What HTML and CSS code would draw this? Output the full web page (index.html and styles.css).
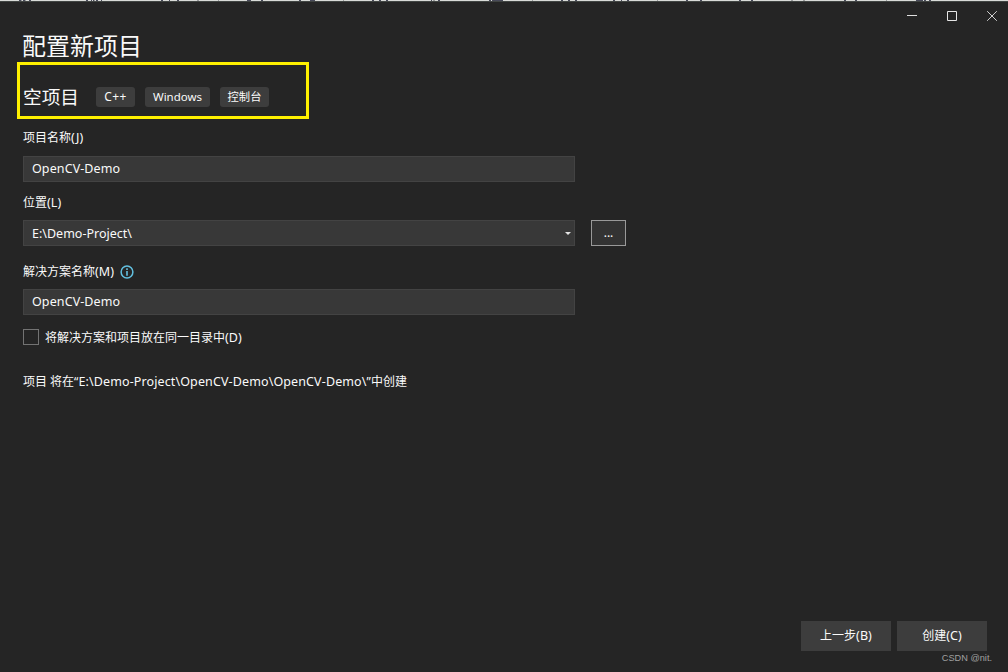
FILE: index.html
```html
<!DOCTYPE html>
<html lang="zh-CN">
<head>
<meta charset="utf-8">
<title>配置新项目</title>
<link rel="stylesheet" href="styles.css">
</head>
<body>
<div class="window">
  <svg class="top-edge" width="1008" height="2" viewBox="0 0 1008 2" shape-rendering="crispEdges">
    <path fill="#d9dbd8" d="M0 0h1008v1H0z"/>
    <path fill="#414543" d="M0 1h1008v1H0z"/>
    <path stroke="#484a59" d="M19 .5h2M23 .5h2M29 .5h2M86 .5h2M91 .5h1M93 .5h1M96 .5h2M101 .5h1M161 .5h2M169 .5h1M177 .5h2M247 .5h4M261 .5h2M299 .5h2M310 .5h5M372 .5h2M379 .5h2M386 .5h2M431 .5h1M438 .5h2M489 .5h2M492 .5h11M561 .5h2M568 .5h2M575 .5h2M613 .5h2M621 .5h1M627 .5h2M686 .5h2M700 .5h2M739 .5h2M751 .5h2M844 .5h2M855 .5h2M916 .5h7M924 .5h2M929 .5h2"/>
    <path stroke="#9a9c9d" d="M21 .5h1M25 .5h1M94 .5h1M197 .5h2M218 .5h1M343 .5h1M433 .5h2M532 .5h1M657 .5h1M791 .5h2M803 .5h2M886 .5h1"/>
  </svg>

  <div class="window-controls">
    <svg width="10" height="10" viewBox="0 0 10 10"><path stroke="#e0e0e0" d="M0 4.5h10"/></svg>
    <svg width="10" height="10" viewBox="0 0 10 10"><path fill="none" stroke="#e6e6e6" d="M.5.5h9v9h-9z"/></svg>
    <svg width="10" height="10" viewBox="0 0 10 10"><path stroke="#d0d0d0" d="M.2.2l9.6 9.6M9.8.2L.2 9.8"/></svg>
  </div>

  <main class="content">
    <h1 class="title">配置新项目</h1>
    <section class="template">
      <h2 class="template-name">空项目</h2>
      <span class="tag tag-lang">C++</span>
      <span class="tag tag-platform">Windows</span>
      <span class="tag tag-type">控制台</span>
    </section>

    <div class="label">项目名称<span class="key">(J)</span></div>
    <div class="field">OpenCV-Demo</div>

    <div class="label label-location">位置<span class="key">(L)</span></div>
    <div class="location-row">
      <div class="field combo"><span>E:\Demo-Project\</span>
        <svg width="6" height="3" viewBox="0 0 6 3"><path fill="#e4e4e4" d="M0 0h6L3 3z"/></svg>
      </div>
      <div class="browse">...</div>
    </div>

    <div class="label label-solution">解决方案名称<span class="key">(M)</span>
      <svg class="info" width="14" height="14" viewBox="0 0 14 14"><circle cx="7" cy="7" r="5.9" fill="none" stroke="#62c0e0" stroke-width="1.5"/><path fill="#62c0e0" d="M6.2 3.3h1.6v1.6H6.2zM6.2 5.9h1.6v4.8H6.2z"/></svg>
    </div>
    <div class="field">OpenCV-Demo</div>

    <div class="check-row"><span class="checkbox"></span><span class="check-text">将解决方案和项目放在同一目录中<span class="key">(D)</span></span></div>
    <p class="summary">项目 将在“<span class="path">E:\Demo-Project\OpenCV-Demo\OpenCV-Demo\</span>”中创建</p>
  </main>

  <footer class="actions">
    <div class="button">上一步<span class="key">(B)</span></div>
    <div class="button">创建<span class="key">(C)</span></div>
  </footer>
  <div class="watermark">CSDN @nit.</div>
</div>
</body>
</html>
```
FILE: styles.css
```css
* { box-sizing: border-box; }

body {
  margin: 0;
  background: #252525;
  color: #fafafa;
  font: 12px/16px "Noto Sans", "Noto Sans CJK SC", sans-serif;
}

.window {
  position: relative;
  display: flex;
  flex-direction: column;
  width: 1008px;
  height: 672px;
  overflow: hidden;
  white-space: nowrap;
}

.top-edge { display: block; flex: none; }

.window-controls {
  display: flex;
  justify-content: flex-end;
  gap: 30px;
  height: 28px;
  padding: 9px 11px 0 0;
}

.content { flex: 1; padding-left: 23px; }

.title {
  height: 32px;
  margin: 0 0 0 -1px;
  font-size: 24px;
  font-weight: 400;
  line-height: 32px;
}

.template {
  display: flex;
  align-items: center;
  width: 292px;
  height: 57px;
  margin-left: -6px;
  padding: 12px 0 0 3px;
  border: 3px solid #fff000;
}

.template-name {
  width: 73px;
  margin: 0;
  font-size: 18.67px;
  font-weight: 400;
  line-height: 24px;
}

.tag {
  height: 20px;
  margin-right: 10px;
  border-radius: 3px;
  background: #3d3d3d;
  font-size: 11.5px;
  line-height: 20px;
  text-align: center;
}

.tag-lang { width: 39px; font-size: 12px; letter-spacing: 0.4px; }
.tag-platform { width: 65px; }
.tag-type { width: 49px; font-size: 11.3px; }

.label {
  display: flex;
  align-items: center;
  height: 16px;
  margin: 11px 0 10px;
}

.key { font-size: 12.5px; letter-spacing: 0.1px; }

.field {
  width: 552px;
  height: 26px;
  padding-left: 8px;
  border: 1px solid #434343;
  background: #383838;
  font-size: 12.5px;
  line-height: 24px;
  letter-spacing: 0.1px;
}

.label-location { margin: 13px 0 9px; }
.location-row { display: flex; gap: 16px; }

.combo {
  display: flex;
  align-items: center;
  justify-content: space-between;
  padding-right: 3px;
  letter-spacing: 0;
}

.combo span { padding-top: 2px; }

.browse {
  width: 35px;
  height: 26px;
  border: 1px solid #999;
  background: #333;
  line-height: 24px;
  text-align: center;
}

.label-solution { margin: 18px 0 9px; }
.info { margin-left: 5.5px; }

.check-row {
  display: flex;
  align-items: center;
  gap: 6px;
  height: 16px;
  margin-top: 14px;
}

.checkbox {
  width: 16px;
  height: 16px;
  border: 1px solid #737373;
}

.check-text { padding-top: 2px; }

.summary { margin: 29px 0 0; }
.path { font-size: 12.5px; letter-spacing: 0.12px; }

.actions {
  display: flex;
  justify-content: flex-end;
  gap: 6px;
  padding: 0 21px 21px 0;
}

.button {
  width: 90px;
  height: 30px;
  background: #3d3d3d;
  line-height: 30px;
  text-align: center;
}

.watermark {
  position: absolute;
  right: 16px;
  bottom: 8px;
  color: #a0a0a0;
  font: 9.2px/12px "Liberation Sans", sans-serif;
}
```
